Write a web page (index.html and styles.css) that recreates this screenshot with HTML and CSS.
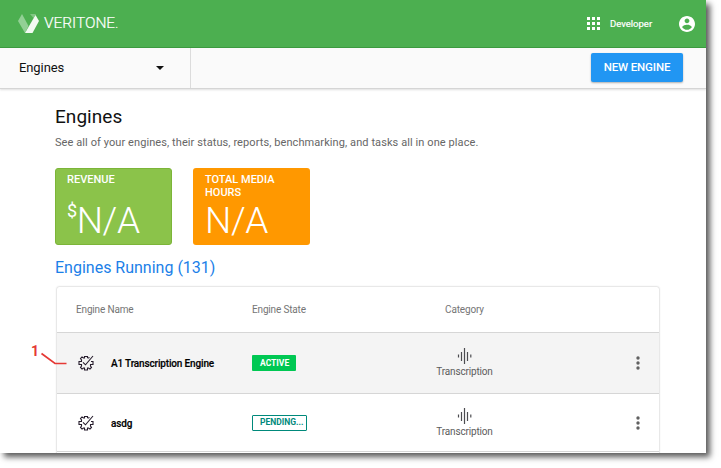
FILE: index.html
```html
<!DOCTYPE html>
<html lang="en">
<head>
<meta charset="utf-8">
<title>Engines</title>
<link rel="stylesheet" href="styles.css">
</head>
<body>
<svg class="defs" width="0" height="0">
  <symbol id="gear" viewBox="0 0 16 16"><path d="M9.500 3V1.500H6.500V3H5.500L4 2 2.500 3.500 3.500 5V6.500H1V9.500H3.500V11L2.500 12.500 4 14 5.500 13H6.500V15H9.500V13H10.500L12 14 13.500 12.500 12.500 11V9.500H15V6.500H13M9.500 3H10.500L11.500 2.500M5 7.300L7.500 9.800 15 1" fill="none" stroke="#261c2c" stroke-width="1.100"/></symbol>
  <symbol id="wave" viewBox="0 0 16 16"><path d="M1.500 6.500v3M4.500 4v9M7.500 0v16M10.500 4v9M13.800 6.500v3" fill="none" stroke="#4c4c50" stroke-width="1.200"/></symbol>
  <symbol id="dots" viewBox="0 0 4 14"><g fill="#616161"><circle cx="2" cy="2" r="1.700"/><circle cx="2" cy="7" r="1.700"/><circle cx="2" cy="12" r="1.700"/></g></symbol>
</svg>
<div class="window">
  <header class="topbar">
    <svg class="logo" viewBox="0 0 22 20"><path d="M0 7 4 0 10.500 12 7 19z" fill="#92d095"/><path d="M12 0h6l-2.500 4z" fill="#82c785"/><path d="M17.500 1 21 7 14.500 19H7z" fill="#f2faf2"/></svg>
    <span class="brand">VERITONE<span class="tm">.</span></span>
    <svg class="apps" viewBox="0 0 13 13"><path d="M0 0h3v3H0zM5 0h3v3H5zM10 0h3v3h-3zM0 5h3v3H0zM5 5h3v3H5zM10 5h3v3h-3zM0 10h3v3H0zM5 10h3v3H5zM10 10h3v3h-3z" fill="#fff"/></svg>
    <span class="role">Developer</span>
    <svg class="user" viewBox="2 2 20 20"><path fill="#fff" d="M12 2C6.480 2 2 6.480 2 12s4.480 10 10 10 10-4.480 10-10S17.520 2 12 2zm0 3c1.660 0 3 1.340 3 3s-1.340 3-3 3-3-1.340-3-3 1.340-3 3-3zm0 14.200c-2.500 0-4.710-1.280-6-3.220.030-1.990 4-3.080 6-3.080 1.990 0 5.970 1.090 6 3.080-1.290 1.940-3.500 3.220-6 3.220z"/></svg>
  </header>
  <nav class="subbar">
    <div class="picker"><span>Engines</span><svg class="caret" viewBox="0 0 8 4"><path d="M0 0h8L4 4z" fill="#111"/></svg></div>
    <button class="new">NEW ENGINE</button>
  </nav>
  <main>
    <h1>Engines</h1>
    <p class="sub">See all of your engines, their status, reports, benchmarking, and tasks all in one place.</p>
    <div class="cards">
      <div class="card revenue"><div class="label">REVENUE</div><div class="value"><span class="cur">$</span><span>N/A</span></div></div>
      <div class="card hours"><div class="label">TOTAL MEDIA HOURS</div><div class="value">N/A</div></div>
    </div>
    <h2>Engines Running (131)</h2>
    <section class="table">
      <div class="row head"><span class="first">Engine Name</span><span>Engine State</span><span class="center">Category</span></div>
      <div class="row active">
        <div class="name"><svg class="gear"><use href="#gear"/></svg><span>A1 Transcription Engine</span></div>
        <div><span class="badge on">ACTIVE</span></div>
        <div class="cat"><svg class="wave"><use href="#wave"/></svg><span>Transcription</span></div>
        <svg class="dots"><use href="#dots"/></svg>
      </div>
      <div class="row last">
        <div class="name"><svg class="gear"><use href="#gear"/></svg><span>asdg</span></div>
        <div><span class="badge pending">PENDING...</span></div>
        <div class="cat"><svg class="wave"><use href="#wave"/></svg><span>Transcription</span></div>
        <svg class="dots"><use href="#dots"/></svg>
      </div>
    </section>
  </main>
  <div class="callout"><span>1</span><svg viewBox="0 0 26 14"><path d="M.500 1.500 14 11.500H25.500" fill="none" stroke="#e53935" stroke-width="1.700"/></svg></div>
</div>
</body>
</html>
```
FILE: styles.css
```css
* { box-sizing: border-box; }
html { height: 468px; background: #fff; }
body { margin: 0; height: 468px; background: #fff; font-family: Roboto, "Liberation Sans", sans-serif; }
svg { display: block; flex: none; }
.defs { position: absolute; }
.window { position: relative; width: 706px; height: 453px; overflow: hidden; background: #fff; box-shadow: 4px 4px 6px 0 rgba(0,0,0,.65); }
.topbar { height: 48px; padding: 0 11px 0 18px; display: flex; align-items: center; background: #4caf50; border-bottom: 1px solid #3c9c40; color: #fff; }
.logo { width: 22px; height: 20px; }
.brand { margin-left: 4px; font-size: 15.500px; font-weight: 300; letter-spacing: -.05px; line-height: 20px; -webkit-text-stroke: .2px; }
.tm { font-size: 12px; }
.apps { width: 13px; height: 13px; margin-left: auto; }
.role { margin-left: 10px; width: 42px; font-size: 9.500px; line-height: 14px; white-space: nowrap; -webkit-text-stroke: .2px; }
.user { width: 16px; height: 16px; margin-left: 27px; }
.subbar { height: 41px; display: flex; justify-content: space-between; background: #fafafa; border-bottom: 1px solid #d5d5d5; box-shadow: 0 1px 2px rgba(0,0,0,.13); }
.picker { width: 191px; padding: 0 26px 1px 19px; display: flex; align-items: center; justify-content: space-between; border-right: 1px solid #dcdcdc; font-size: 13px; letter-spacing: -.1px; color: #111; }
.caret { width: 8px; height: 4px; }
.new { width: 92px; height: 29px; margin: 5px 23px 0 0; padding: 0 0 1px; border: 0; border-radius: 2px; background: #2196f3; color: #fff; font: 500 11.500px Roboto, sans-serif; letter-spacing: -.15px; box-shadow: 0 1px 2px rgba(0,0,0,.3); }
main { padding: 16px 47px 0 55px; }
h1 { margin: 0; font-size: 19px; line-height: 24px; font-weight: 400; letter-spacing: .05px; color: #111; }
.sub { margin: 6px 0 0; font-size: 11px; line-height: 16px; letter-spacing: .085px; color: #666; white-space: nowrap; }
.cards { display: flex; gap: 21px; margin-top: 17px; }
.card { width: 117px; height: 77px; border-radius: 3px; padding: 5px 12px; color: #fff; display: flex; flex-direction: column; }
.revenue { background: #8bc34a; border: 1px solid #7cb538; padding: 4px 11px; }
.hours { background: #ff9800; }
.label { flex: none; height: 26px; font-size: 11px; line-height: 13px; font-weight: 500; }
.value { display: flex; font-size: 37px; line-height: 44px; font-weight: 300; letter-spacing: -.4px; white-space: nowrap; }
.cur { margin-top: 3px; font-size: 18px; line-height: 18px; font-weight: 400; }
h2 { margin: 12px 0 0; font-size: 16px; line-height: 21px; font-weight: 400; color: #1b80e8; }
.table { margin: 9px 0 0 2px; width: 602px; height: 180px; border-radius: 2px 2px 0 0; box-shadow: 0 0 2px rgba(0,0,0,.35); background: #fff; }
.row { display: grid; grid-template-columns: 195px 163px 99px 1fr; align-items: center; height: 61px; border-bottom: 1px solid #d6d6d6; }
.head { height: 46px; font-size: 10px; letter-spacing: -.16px; color: #757575; }
.first { padding-left: 19px; }
.center { text-align: center; }
.active { background: #f4f4f4; }
.last { height: 58px; padding-top: 1px; }
.name { display: flex; align-items: center; padding-left: 21px; font-size: 10px; font-weight: 500; letter-spacing: -.16px; color: #000; }
.name span { margin-left: 17px; -webkit-text-stroke: .15px; }
.gear { width: 16px; height: 16px; }
.badge { display: flex; width: 44px; height: 16px; padding: 0 0 1px 8px; align-items: center; border-radius: 1px; font-size: 8.500px; line-height: 14px; font-weight: 700; }
.on { background: #00c853; color: #fff; }
.pending { width: 55px; padding: 0 0 2px 7px; border: 1px solid #00897b; color: #00897b; background: #fff; letter-spacing: 0; }
.cat { display: flex; flex-direction: column; align-items: center; font-size: 10px; line-height: 13px; letter-spacing: -.16px; color: #5c5c5c; }
.wave { width: 16px; height: 16px; margin-bottom: 1px; }
.dots { width: 4px; height: 14px; justify-self: end; margin: 0 19px 0 0; }
.callout { position: absolute; left: 31px; top: 343px; display: flex; color: #e53935; font-size: 14px; line-height: 16px; font-weight: 700; }
.callout svg { width: 26px; height: 14px; margin: 9px 0 0 2px; }
```
